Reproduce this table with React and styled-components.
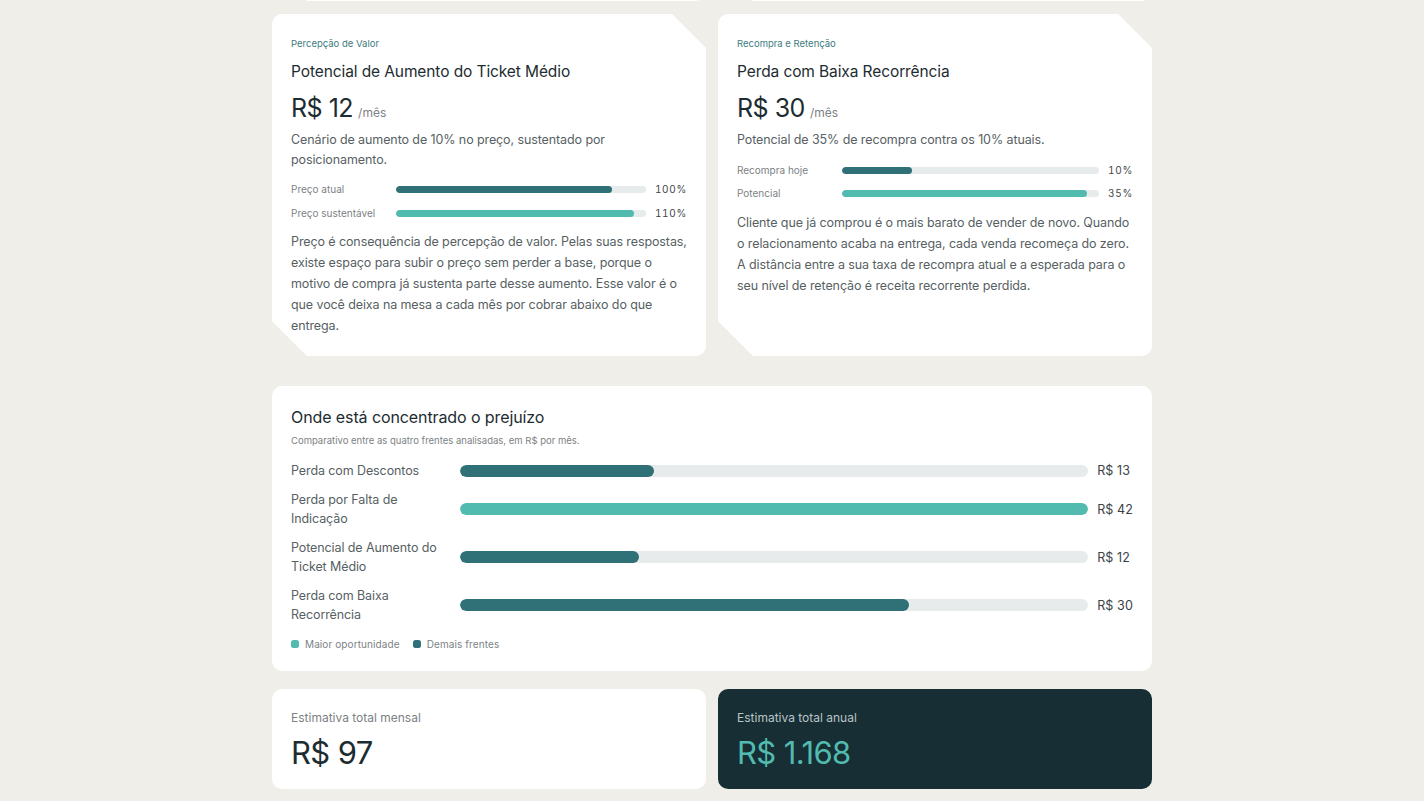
import React, { useLayoutEffect, useRef } from "react";
import styled, { createGlobalStyle } from "styled-components";

const C = {
  bg: "#EFEEE9",
  card: "#FFFFFF",
  ink: "#1D2C31",
  body: "#575F63",
  muted: "#7C8285",
  eyebrow: "#3D7C82",
  dark: "#2F7177",
  light: "#52BBB0",
  track: "#E8EBEB",
  night: "#172E35",
};

const Global = createGlobalStyle`
  html, body { margin: 0; padding: 0; background: ${C.bg}; }
  body { font-family: Inter, "Noto Sans", "Liberation Sans", sans-serif; color: ${C.ink}; -webkit-font-smoothing: antialiased; }
  * { box-sizing: border-box; }
`;

const Page = styled.main`
  width: 880px;
  margin: 0 auto;
  padding: 40px 0 60px;
  display: flex;
  flex-direction: column;
`;

const Grid = styled.section`
  display: grid;
  grid-template-columns: 1fr 1fr;
  gap: 13px 12px;
`;

const Card = styled.article`
  background: ${C.card};
  border-radius: 10px;
  padding: 24px 19px 20px;
  clip-path: polygon(0 0, calc(100% - 34px) 0, 100% 34px, 100% 100%, 35px 100%, 0 calc(100% - 35px));
  display: flex;
  flex-direction: column;
`;

const Eyebrow = styled.div`
  font-size: 9.5px;
  line-height: 12px;
  color: ${C.eyebrow};
  margin-bottom: 12px;
`;

const Title = styled.h3`
  margin: 0;
  font-size: 15.5px;
  line-height: 20px;
  font-weight: 400;
  color: ${C.ink};
  letter-spacing: -0.1px;
`;

const Amount = styled.div`
  margin-top: 11px;
  display: flex;
  align-items: baseline;
  gap: 5px;
  font-size: 25px;
  line-height: 30px;
  letter-spacing: -0.5px;
  color: ${C.ink};
`;

const Per = styled.span`
  font-size: 12px;
  color: ${C.muted};
  letter-spacing: 0;
`;

const Desc = styled.p`
  margin: 2px 0 0;
  font-size: 12.5px;
  line-height: 20px;
  color: ${C.body};
  letter-spacing: -0.1px;
`;

const Compare = styled.div`
  margin-top: ${(p) => p.$top}px;
  display: grid;
  grid-template-columns: 105px 1fr auto;
  row-gap: ${(p) => p.$gap}px;
  align-items: center;
`;

const SmallLabel = styled.span`
  font-size: 10px;
  line-height: 14px;
  color: ${C.muted};
`;

const Track = styled.div`
  height: ${(p) => p.$h}px;
  border-radius: 99px;
  background: ${C.track};
  overflow: hidden;
`;

const Fill = styled.div`
  height: 100%;
  border-radius: 99px;
  background: ${(p) => (p.$hi ? C.light : C.dark)};
`;

const Pct = styled.span`
  padding-left: 9px;
  font-size: 10px;
  line-height: 14px;
  letter-spacing: 0.7px;
  font-variant-numeric: tabular-nums;
  color: #3F4649;
  text-align: right;
`;

const Body = styled.p`
  margin: ${(p) => p.$top}px 0 0;
  font-size: 12.5px;
  line-height: 21px;
  color: ${C.body};
  letter-spacing: -0.1px;
`;

const Panel = styled.section`
  margin-top: 30px;
  background: ${C.card};
  border-radius: 10px;
  padding: 20px 19px 21px;
`;

const PanelTitle = styled.h2`
  margin: 0;
  font-size: 16px;
  line-height: 22px;
  font-weight: 400;
  color: ${C.ink};
  letter-spacing: -0.1px;
`;

const PanelSub = styled.div`
  margin-top: 7px;
  font-size: 9.5px;
  line-height: 12px;
  color: ${C.muted};
`;

const Chart = styled.div`
  margin-top: 14px;
  display: grid;
  grid-template-columns: 169px 1fr auto;
  row-gap: 10px;
  align-items: center;
`;

const ChartLabel = styled.span`
  max-width: 152px;
  font-size: 12.5px;
  line-height: 19px;
  color: ${C.body};
  letter-spacing: -0.1px;
`;

const ChartValue = styled.span`
  padding-left: 9px;
  font-size: 12.5px;
  line-height: 19px;
  color: #3A4245;
  white-space: nowrap;
  letter-spacing: 0.1px;
`;

const Legend = styled.div`
  margin-top: 14px;
  display: flex;
  gap: 13px;
`;

const LegendItem = styled.span`
  display: inline-flex;
  align-items: center;
  gap: 6px;
  font-size: 10px;
  line-height: 12px;
  letter-spacing: 0.1px;
  color: ${C.muted};
  &::before {
    content: "";
    width: 8px;
    height: 8px;
    border-radius: 2.5px;
    background: ${(p) => (p.$hi ? C.light : C.dark)};
  }
`;

const Totals = styled.section`
  margin-top: 18px;
  display: grid;
  grid-template-columns: 1fr 1fr;
  gap: 12px;
`;

const TotalCard = styled.div`
  border-radius: 10px;
  padding: 21px 19px 17px;
  background: ${(p) => (p.$dark ? C.night : C.card)};
`;

const TotalLabel = styled.div`
  font-size: 12px;
  line-height: 16px;
  color: ${(p) => (p.$dark ? "#B9C3C5" : C.muted)};
`;

const TotalValue = styled.div`
  margin-top: 8px;
  font-size: 31px;
  line-height: 38px;
  letter-spacing: -0.6px;
  color: ${(p) => (p.$dark ? C.light : C.ink)};
`;

const cards = [
  {
    eyebrow: "Política de Descontos",
    title: "Perda com Descontos",
    amount: 13,
    desc: "Descontos concedidos sem contrapartida de volume.",
    bars: [
      { label: "Com desconto", v: 100 },
      { label: "Sem desconto", v: 87, hi: true },
    ],
    top: 12,
    gap: 10,
    bodyTop: 11,
    body: "Desconto que não traz volume é margem que sai do seu bolso. Pelas suas respostas, parte dos descontos é dada por hábito, e não por estratégia.",
  },
  {
    eyebrow: "Indicação e Boca a Boca",
    title: "Perda por Falta de Indicação",
    amount: 42,
    desc: "Potencial de indicações que hoje não acontece.",
    bars: [
      { label: "Indicação hoje", v: 5 },
      { label: "Potencial", v: 30, hi: true },
    ],
    top: 12,
    gap: 10,
    bodyTop: 11,
    body: "Cliente satisfeito que não indica é uma venda que ninguém faz por você. Sem um processo de indicação, esse crescimento fica parado.",
  },
  {
    eyebrow: "Percepção de Valor",
    title: "Potencial de Aumento do Ticket Médio",
    amount: 12,
    desc: "Cenário de aumento de 10% no preço, sustentado por posicionamento.",
    bars: [
      { label: "Preço atual", v: 100 },
      { label: "Preço sustentável", v: 110, hi: true },
    ],
    top: 12,
    gap: 10,
    bodyTop: 11,
    body: "Preço é consequência de percepção de valor. Pelas suas respostas, existe espaço para subir o preço sem perder a base, porque o motivo de compra já sustenta parte desse aumento. Esse valor é o que você deixa na mesa a cada mês por cobrar abaixo do que entrega.",
  },
  {
    eyebrow: "Recompra e Retenção",
    title: "Perda com Baixa Recorrência",
    amount: 30,
    desc: "Potencial de 35% de recompra contra os 10% atuais.",
    bars: [
      { label: "Recompra hoje", v: 10 },
      { label: "Potencial", v: 35, hi: true },
    ],
    top: 13,
    gap: 9,
    bodyTop: 12,
    body: "Cliente que já comprou é o mais barato de vender de novo. Quando o relacionamento acaba na entrega, cada venda recomeça do zero. A distância entre a sua taxa de recompra atual e a esperada para o seu nível de retenção é receita recorrente perdida.",
  },
];

const fronts = [
  { label: "Perda com Descontos", v: 13 },
  { label: "Perda por Falta de Indicação", v: 42, hi: true },
  { label: "Potencial de Aumento do Ticket Médio", v: 12 },
  { label: "Perda com Baixa Recorrência", v: 30 },
];

function FrontCard({ c, innerRef }) {
  const max = Math.max(...c.bars.map((b) => b.v)) * 1.05;
  return (
    <Card ref={innerRef}>
      <Eyebrow>{c.eyebrow}</Eyebrow>
      <Title>{c.title}</Title>
      <Amount>
        R$ {c.amount}
        <Per>/mês</Per>
      </Amount>
      <Desc>{c.desc}</Desc>
      <Compare $top={c.top} $gap={c.gap}>
        {c.bars.map((b) => (
          <React.Fragment key={b.label}>
            <SmallLabel>{b.label}</SmallLabel>
            <Track $h={7}>
              <Fill $hi={b.hi} style={{ width: `${(b.v / max) * 100}%` }} />
            </Track>
            <Pct>{b.v}%</Pct>
          </React.Fragment>
        ))}
      </Compare>
      <Body $top={c.bodyTop}>{c.body}</Body>
    </Card>
  );
}

export default function App() {
  const rowRef = useRef(null);
  useLayoutEffect(() => {
    const el = rowRef.current;
    if (el) {
      const top = el.getBoundingClientRect().top + window.scrollY;
      window.scrollTo(0, top - 14);
    }
  }, []);
  const maxFront = Math.max(...fronts.map((f) => f.v));
  return (
    <>
      <Global />
      <Page>
        <Grid>
          <FrontCard c={cards[0]} />
          <FrontCard c={cards[1]} />
          <FrontCard c={cards[2]} innerRef={rowRef} />
          <FrontCard c={cards[3]} />
        </Grid>

        <Panel>
          <PanelTitle>Onde está concentrado o prejuízo</PanelTitle>
          <PanelSub>Comparativo entre as quatro frentes analisadas, em R$ por mês.</PanelSub>
          <Chart>
            {fronts.map((f) => (
              <React.Fragment key={f.label}>
                <ChartLabel>{f.label}</ChartLabel>
                <Track $h={12}>
                  <Fill $hi={f.hi} style={{ width: `${(f.v / maxFront) * 100}%` }} />
                </Track>
                <ChartValue>R$ {f.v}</ChartValue>
              </React.Fragment>
            ))}
          </Chart>
          <Legend>
            <LegendItem $hi>Maior oportunidade</LegendItem>
            <LegendItem>Demais frentes</LegendItem>
          </Legend>
        </Panel>

        <Totals>
          <TotalCard>
            <TotalLabel>Estimativa total mensal</TotalLabel>
            <TotalValue>R$ 97</TotalValue>
          </TotalCard>
          <TotalCard $dark>
            <TotalLabel $dark>Estimativa total anual</TotalLabel>
            <TotalValue $dark>R$ 1.168</TotalValue>
          </TotalCard>
        </Totals>
      </Page>
    </>
  );
}
